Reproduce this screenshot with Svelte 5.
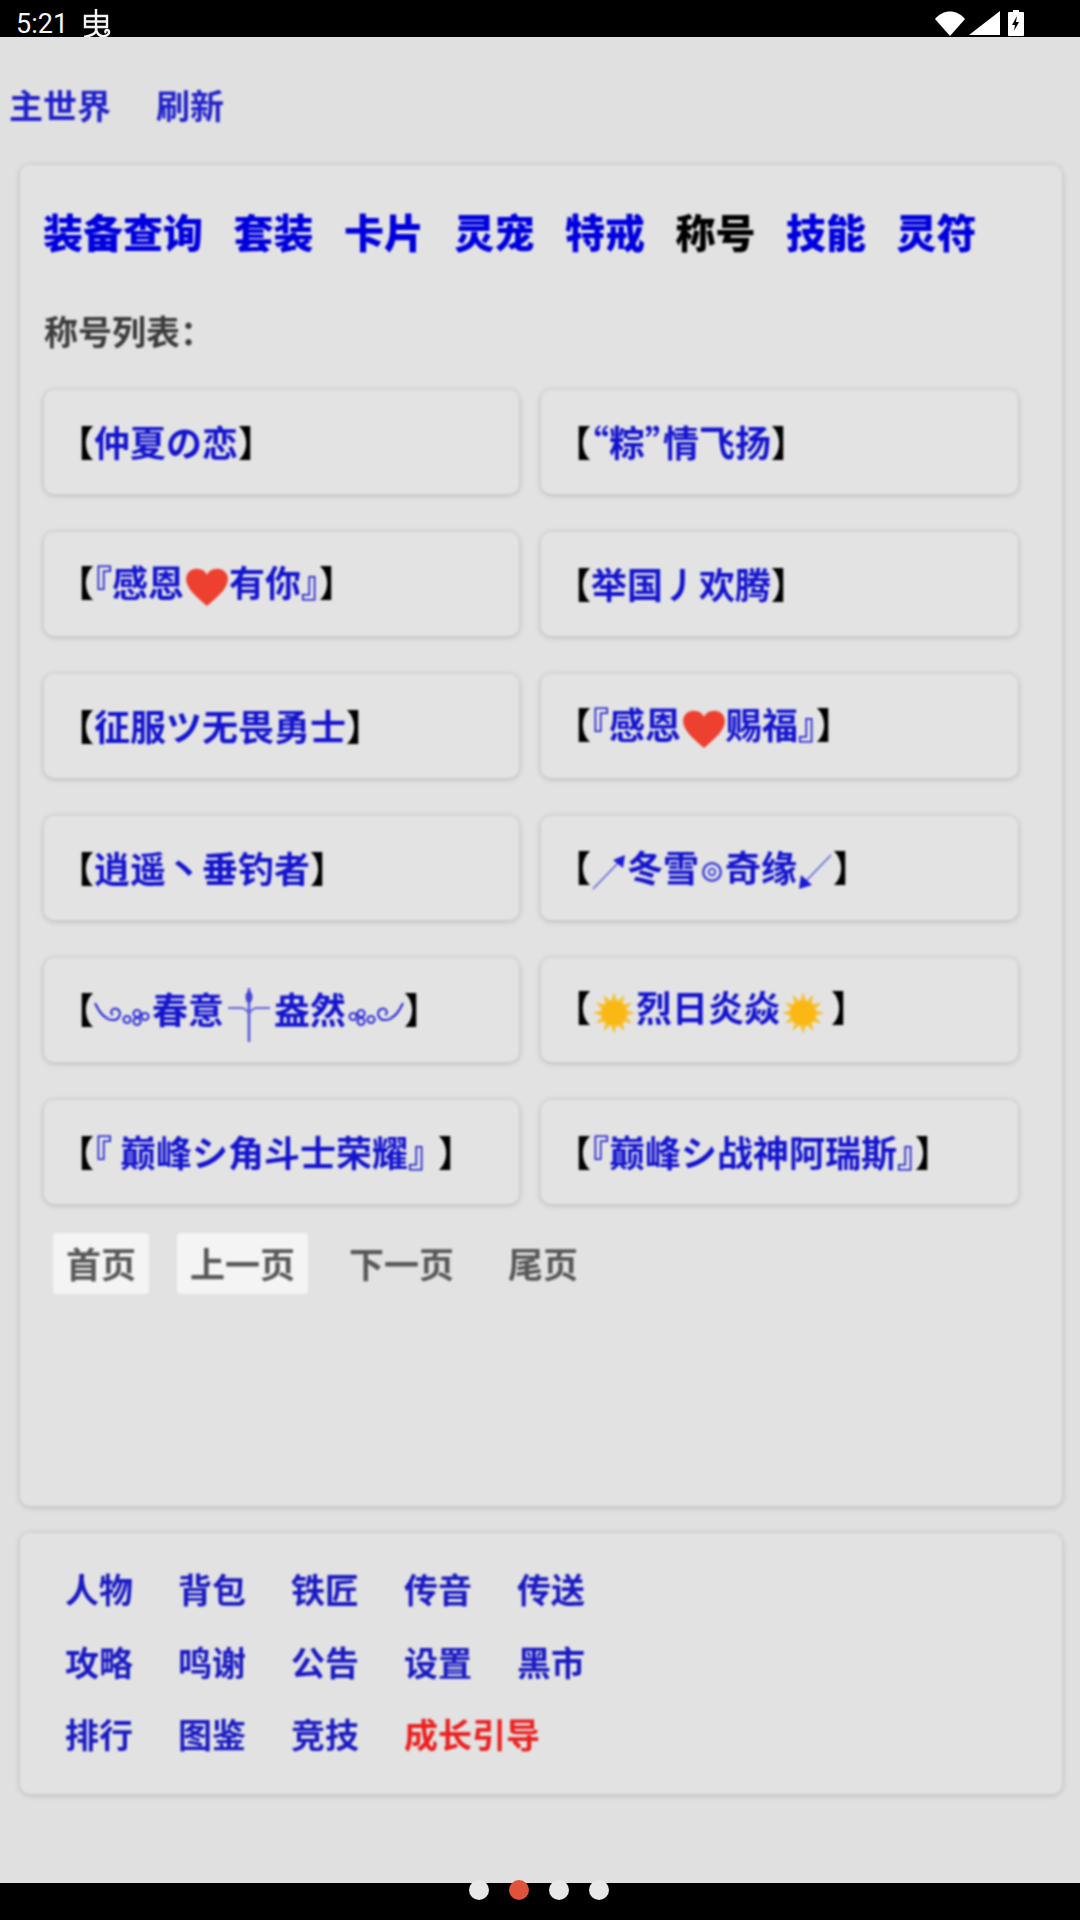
<script>
  const tabs = ['装备查询', '套装', '卡片', '灵宠', '特戒', '称号', '技能', '灵符'];
  const activeTab = '称号';

  // segments: strings are blue title text, {tight} is text with half-width punctuation,
  // {icon} draws an inline svg, {gap} adds space
  const titles = [
    ['仲夏の恋'],
    [{ tight: '“粽”' }, '情飞扬'],
    ['『感恩', { icon: 'heart' }, '有你』'],
    ['举国丿欢腾'],
    ['征服ツ无畏勇士'],
    ['『感恩', { icon: 'heart' }, '赐福』'],
    ['逍遥丶垂钓者'],
    [{ icon: 'arrowUp' }, '冬雪', { icon: 'ring' }, '奇缘', { icon: 'arrowDown' }],
    [{ icon: 'curlLeft' }, '春意', { icon: 'cross' }, '盎然', { icon: 'curlRight' }],
    [{ icon: 'sun' }, '烈日炎焱', { icon: 'sun' }, { gap: 6 }],
    ['『', { gap: 8 }, '巅峰シ角斗士荣耀', { tight: '』' }, { gap: 12 }],
    ['『巅峰シ战神阿瑞斯』']
  ];

  const pages = [
    { label: '首页', on: true },
    { label: '上一页', on: true },
    { label: '下一页', on: false },
    { label: '尾页', on: false }
  ];

  const links = [
    ['人物', '背包', '铁匠', '传音', '传送'],
    ['攻略', '鸣谢', '公告', '设置', '黑市'],
    ['排行', '图鉴', '竞技', '成长引导']
  ];

  const sunRays = Array.from({ length: 12 }, (_, i) => i * 30);
</script>

<div class="page">
  <div class="statusbar">
    <div class="status-left">
      <span class="time">5:21</span>
      <svg class="bug" viewBox="0 0 28 28" width="28" height="28">
        <path d="M13 0v6M2 7h22v11H2zM13 7v15M2 12.500h22M13 22c-1 3-6 5-12 6M13 18c0 7 4 10 9 9 5-1 5-6 2-6-2 0-2 2-1 3" fill="none" stroke="#f4f4f4" stroke-width="2.400" />
      </svg>
    </div>
    <div class="status-right">
      <svg viewBox="0 0 30 25" width="30" height="25"><path d="M0 8C8-2 22-2 30 8L15 25z" fill="#fff" /></svg>
      <svg viewBox="0 0 31 24" width="31" height="24"><path d="M0 24L31 0v24z" fill="#fff" /></svg>
      <svg class="battery" viewBox="0 0 16 26" width="16" height="26">
        <path d="M5 0h6v2h4a1 1 0 0 1 1 1v22a1 1 0 0 1-1 1H1a1 1 0 0 1-1-1V3a1 1 0 0 1 1-1h4z" fill="#fff" />
        <path d="M9 6L4 15h3l-1 6 5-9H8z" fill="#000" />
      </svg>
    </div>
  </div>

  <main class="content">
    <nav class="top-links">
      <span>主世界</span>
      <span>刷新</span>
    </nav>

    <section class="card main-card">
      <div class="tabs">
        {#each tabs as tab}
          <span class="tab" class:active={tab === activeTab}>{tab}</span>
        {/each}
      </div>

      <div class="list-label">称号列表：</div>

      <div class="title-grid">
        {#each titles as parts}
          <div class="title-item">
            <span class="title-text"><span class="bracket">【</span>{#each parts as part}{#if typeof part === 'string'}<span class="name">{part}</span>{:else if part.tight}<span class="name tight">{part.tight}</span>{:else if part.gap}<span class="gap" style="width: {part.gap}px"></span>{:else if part.icon === 'heart'}<svg class="ico heart" viewBox="0 0 40 40" width="44" height="40" preserveAspectRatio="none">
                  <path d="M20 39C8 28 1 20 1 12 1 5 7 1 12 2c4 0 7 3 8 6 1-3 4-6 8-6 5-1 11 3 11 10 0 8-7 16-19 27z" fill="#ee4030" />
                </svg>{:else if part.icon === 'sun'}<svg class="ico sun" viewBox="0 0 40 40" width="42" height="42">
                  {#each sunRays as deg}
                    <path d="M20 0l3.500 10h-7z" fill="#f5c43a" transform="rotate({deg} 20 20)" />
                  {/each}
                  <circle cx="20" cy="20" r="12" fill="#fbb814" />
                </svg>{:else if part.icon === 'arrowUp'}<svg class="ico" viewBox="0 0 36 36" width="36" height="36">
                  <path d="M2 35L28 8" stroke="#5a5ae0" stroke-width="1.500" fill="none" />
                  <path d="M34 1l-2 13-10-8z" fill="#1a1ad8" />
                </svg>{:else if part.icon === 'arrowDown'}<svg class="ico" viewBox="0 0 36 36" width="36" height="36">
                  <path d="M34 1L8 28" stroke="#5a5ae0" stroke-width="1.500" fill="none" />
                  <path d="M2 35l2-14 11 10z" fill="#1a1ad8" />
                </svg>{:else if part.icon === 'ring'}<svg class="ico ring" viewBox="0 0 20 20" width="22" height="22">
                  <circle cx="10" cy="10" r="8" fill="none" stroke="#3c3cd8" stroke-width="2.200" />
                  <circle cx="10" cy="10" r="3" fill="none" stroke="#3c3cd8" stroke-width="1.600" />
                </svg>{:else if part.icon === 'curlLeft'}<svg class="ico" viewBox="0 0 58 26" width="58" height="26">
                  <path d="M1 1c4 9 9 16 17 17 7 1 11-8 5-11-5-2-8 4-4 6M33 14a3.500 3.500 0 1 0 0.100 0M43 8a3.500 3.500 0 1 0 0.100 0M43 16a3.500 3.500 0 1 0 0.100 0M51 11a3.500 3.500 0 1 0 0.100 0" fill="none" stroke="#2828d8" stroke-width="2" />
                </svg>{:else if part.icon === 'curlRight'}<svg class="ico" viewBox="0 0 58 26" width="58" height="26">
                  <path d="M57 1c-4 9-9 16-17 17-7 1-11-8-5-11 5-2 8 4 4 6M25 14a3.500 3.500 0 1 0 0.100 0M15 8a3.500 3.500 0 1 0 0.100 0M15 16a3.500 3.500 0 1 0 0.100 0M7 11a3.500 3.500 0 1 0 0.100 0" fill="none" stroke="#2828d8" stroke-width="2" />
                </svg>{:else if part.icon === 'cross'}<svg class="ico cross" viewBox="0 0 44 54" width="44" height="54">
                  <path d="M22 0v54" stroke="#5050dc" stroke-width="2.500" />
                  <path d="M1 20h13c4 0 6 2 8 6 2-4 4-6 8-6h13" fill="none" stroke="#6060e0" stroke-width="2" />
                  <ellipse cx="22" cy="9" rx="3.500" ry="6" fill="#4444d8" />
                </svg>{/if}{/each}<span class="bracket">】</span></span>
          </div>
        {/each}
      </div>

      <div class="pager">
        {#each pages as page}
          <span class="page-btn" class:on={page.on}>{page.label}</span>
        {/each}
      </div>
    </section>

    <section class="card link-card">
      {#each links as row}
        <div class="link-row">
          {#each row as link}
            <span class="link" class:guide={link === '成长引导'}>{link}</span>
          {/each}
        </div>
      {/each}
    </section>
  </main>

  <footer class="bottombar">
    <div class="dots">
      <span class="dot"></span>
      <span class="dot current"></span>
      <span class="dot"></span>
      <span class="dot"></span>
    </div>
  </footer>
</div>

<style>
  :global(body) {
    margin: 0;
    background: #e0e0e0;
  }

  .page {
    width: 1080px;
    height: 1920px;
    display: flex;
    flex-direction: column;
    overflow: hidden;
    font-family: "Noto Sans CJK SC", "Noto Sans", sans-serif;
  }

  .statusbar {
    height: 37px;
    flex: none;
    background: #000;
    display: flex;
    justify-content: space-between;
    padding: 0 56px 0 16px;
  }

  .status-left {
    display: flex;
    gap: 15px;
  }

  .time {
    margin-top: 12px;
    font-family: Roboto, sans-serif;
    font-size: 27px;
    line-height: 25px;
    color: #f4f4f4;
  }

  .bug {
    margin-top: 9px;
  }

  .status-right {
    display: flex;
    align-items: flex-start;
    gap: 4px;
    padding-top: 11px;
  }

  .battery {
    margin: -1px 0 0 4px;
  }

  .content {
    flex: 1;
    display: flex;
    flex-direction: column;
    filter: blur(0.9px);
  }

  .top-links {
    display: flex;
    gap: 45px;
    padding: 49px 0 0 9px;
    margin-bottom: 41px;
    font-size: 34px;
    line-height: 38px;
    font-weight: 700;
    color: #2020cc;
  }

  .card {
    margin: 0 18px 0 20px;
    background: #e2e2e2;
    border-radius: 10px;
    box-shadow: 0 1px 6px rgba(0, 0, 0, 0.2);
  }

  .main-card {
    height: 1341px;
    box-sizing: border-box;
    padding: 46px 44px 0 24px;
    margin-bottom: 27px;
  }

  .tabs {
    display: flex;
    gap: 30.5px;
    margin-left: -1px;
    font-size: 40px;
    line-height: 40px;
    font-weight: 900;
    color: #0000e0;
  }

  .tab.active {
    color: #000;
  }

  .list-label {
    margin: 61px 0 40px;
    font-size: 34px;
    line-height: 38px;
    font-weight: 700;
    color: #3c3c3c;
  }

  .title-grid {
    display: grid;
    grid-template-columns: 475px 477px;
    grid-auto-rows: 104px;
    gap: 38px 22px;
  }

  .title-item {
    display: flex;
    align-items: center;
    box-sizing: border-box;
    padding: 0 0 2px 14px;
    border-radius: 10px;
    background: #e3e3e3;
    box-shadow: 0 1px 6px rgba(0, 0, 0, 0.2);
  }

  .title-text {
    font-size: 36px;
    line-height: 44px;
    font-weight: 700;
    white-space: nowrap;
  }

  .bracket {
    color: #000;
  }

  .name {
    color: #1414d0;
  }

  .name.tight {
    font-feature-settings: "halt";
  }

  .gap {
    display: inline-block;
  }

  .ico {
    vertical-align: middle;
  }

  .ico.heart {
    margin-left: 1px;
  }

  .ico.sun {
    margin: 0 1px 0 2px;
  }

  .ico.ring {
    margin: 0 2px;
  }

  /* taller than the text line, the negative margin keeps the line height */
  .ico.cross {
    margin: -10px 3px;
  }

  .pager {
    display: flex;
    margin: 29px 0 0 9px;
    gap: 28px;
  }

  .page-btn {
    padding: 0 13px;
    height: 61px;
    line-height: 60px;
    font-size: 35px;
    font-weight: 700;
    color: #585858;
    border-radius: 4px;
  }

  .page-btn.on {
    background: #f4f4f4;
  }

  .link-card {
    height: 261px;
    box-sizing: border-box;
    padding: 36px 0 0 45px;
    display: flex;
    flex-direction: column;
    gap: 32.5px;
  }

  .link-row {
    display: flex;
    gap: 45px;
  }

  .link {
    font-size: 34px;
    line-height: 40px;
    font-weight: 700;
    color: #1a1ac4;
  }

  .link.guide {
    color: #ec2020;
  }

  .bottombar {
    height: 37px;
    flex: none;
    background: #000;
    position: relative;
  }

  .dots {
    position: absolute;
    top: -3px;
    left: 469px;
    display: flex;
    gap: 20px;
  }

  .dot {
    width: 20px;
    height: 20px;
    border-radius: 50%;
    background: #e8e8e8;
  }

  .dot.current {
    background: #e0533a;
  }
</style>
